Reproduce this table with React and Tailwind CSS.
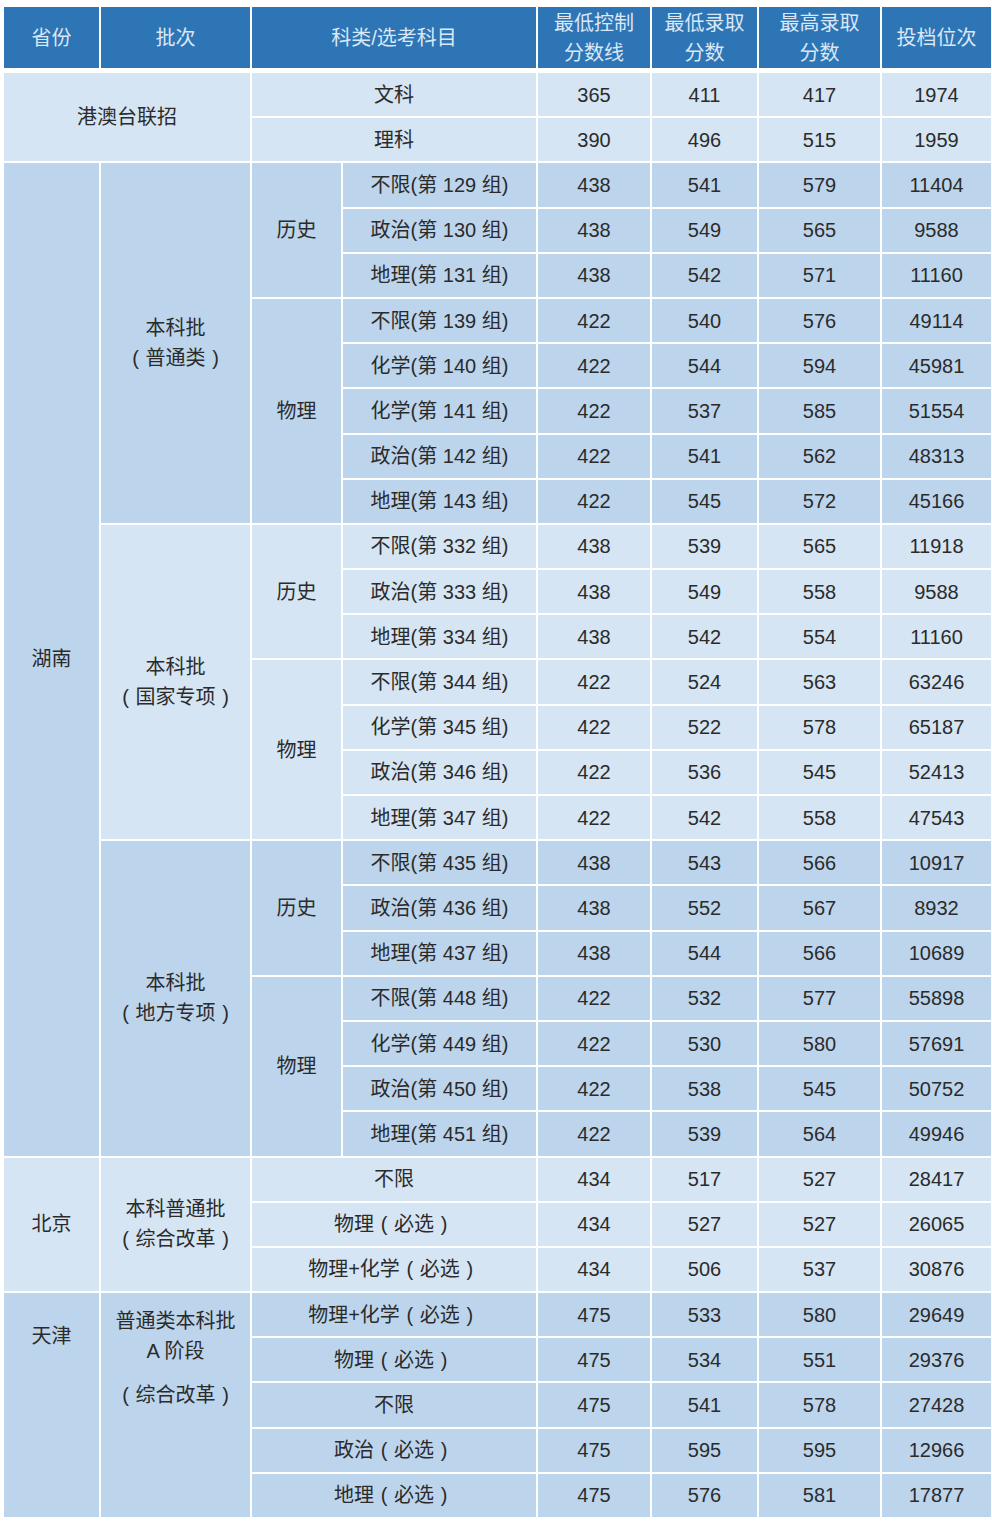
import React from "react";

const DARK = "bg-[#bdd5ec]";
const LIGHT = "bg-[#d6e5f3]";
const COLS = "grid grid-cols-[95px_149px_89px_193px_112px_105px_121px_109px] gap-[2px]";
const COLSTART = ["col-start-1", "col-start-2", "col-start-3", "col-start-4", "col-start-5", "col-start-6", "col-start-7", "col-start-8"];

function T({ s }) {
  if (typeof s !== "string") return s;
  const parts = s.split(/([（）])/);
  return parts.map((p, i) =>
    p === "（" ? (
      <span key={i} className="inline-block w-[1em] text-center">(</span>
    ) : p === "）" ? (
      <span key={i} className="inline-block w-[1em] text-center">)</span>
    ) : (
      <React.Fragment key={i}>{p}</React.Fragment>
    )
  );
}

function Cell({ col, span = "", bg, className = "", children }) {
  return (
    <div className={`${COLSTART[col - 1]} ${span} ${bg} flex flex-col items-center justify-center text-center text-[20px] leading-[30px] text-[#2b2b2b] ${className}`}>
      {children}
    </div>
  );
}

function Nums({ vals, bg }) {
  return vals.map((v, i) => (
    <Cell key={i} col={5 + i} bg={bg}>
      {v}
    </Cell>
  ));
}

const hunan = [
  {
    label: ["本科批", "（普通类）"],
    bg: DARK,
    groups: [
      {
        name: "历史",
        rows: [
          ["不限(第 129 组)", 438, 541, 579, 11404],
          ["政治(第 130 组)", 438, 549, 565, 9588],
          ["地理(第 131 组)", 438, 542, 571, 11160],
        ],
      },
      {
        name: "物理",
        rows: [
          ["不限(第 139 组)", 422, 540, 576, 49114],
          ["化学(第 140 组)", 422, 544, 594, 45981],
          ["化学(第 141 组)", 422, 537, 585, 51554],
          ["政治(第 142 组)", 422, 541, 562, 48313],
          ["地理(第 143 组)", 422, 545, 572, 45166],
        ],
      },
    ],
  },
  {
    label: ["本科批", "（国家专项）"],
    bg: LIGHT,
    groups: [
      {
        name: "历史",
        rows: [
          ["不限(第 332 组)", 438, 539, 565, 11918],
          ["政治(第 333 组)", 438, 549, 558, 9588],
          ["地理(第 334 组)", 438, 542, 554, 11160],
        ],
      },
      {
        name: "物理",
        rows: [
          ["不限(第 344 组)", 422, 524, 563, 63246],
          ["化学(第 345 组)", 422, 522, 578, 65187],
          ["政治(第 346 组)", 422, 536, 545, 52413],
          ["地理(第 347 组)", 422, 542, 558, 47543],
        ],
      },
    ],
  },
  {
    label: ["本科批", "（地方专项）"],
    bg: DARK,
    groups: [
      {
        name: "历史",
        rows: [
          ["不限(第 435 组)", 438, 543, 566, 10917],
          ["政治(第 436 组)", 438, 552, 567, 8932],
          ["地理(第 437 组)", 438, 544, 566, 10689],
        ],
      },
      {
        name: "物理",
        rows: [
          ["不限(第 448 组)", 422, 532, 577, 55898],
          ["化学(第 449 组)", 422, 530, 580, 57691],
          ["政治(第 450 组)", 422, 538, 545, 50752],
          ["地理(第 451 组)", 422, 539, 564, 49946],
        ],
      },
    ],
  },
];

const SPAN = { 3: "row-span-3", 4: "row-span-4", 5: "row-span-5", 7: "row-span-7", 8: "row-span-8" };

export default function App() {
  const cells = [];
  let k = 0;
  // HK
  cells.push(
    <Cell key={k++} col={1} span="col-span-2 row-span-2" bg={LIGHT}>港澳台联招</Cell>,
    <Cell key={k++} col={3} span="col-span-2" bg={LIGHT}>文科</Cell>,
    ...Nums({ vals: [365, 411, 417, 1974], bg: LIGHT }).map((c) => React.cloneElement(c, { key: k++ })),
    <Cell key={k++} col={3} span="col-span-2" bg={LIGHT}>理科</Cell>,
    ...Nums({ vals: [390, 496, 515, 1959], bg: LIGHT }).map((c) => React.cloneElement(c, { key: k++ }))
  );
  // Hunan
  cells.push(
    <Cell key={k++} col={1} span="row-span-22" bg={DARK}>湖南</Cell>
  );
  hunan.forEach((b) => {
    const total = b.groups.reduce((s, g) => s + g.rows.length, 0);
    b.groups.forEach((g, gi) => {
      g.rows.forEach((r, ri) => {
        if (gi === 0 && ri === 0) {
          cells.push(
            <Cell key={k++} col={2} span={SPAN[total]} bg={b.bg}>
              <span>{b.label[0]}</span>
              <span><T s={b.label[1]} /></span>
            </Cell>
          );
        }
        if (ri === 0) {
          cells.push(
            <Cell key={k++} col={3} span={SPAN[g.rows.length]} bg={b.bg}>{g.name}</Cell>
          );
        }
        cells.push(<Cell key={k++} col={4} bg={b.bg}>{r[0]}</Cell>);
        Nums({ vals: r.slice(1), bg: b.bg }).forEach((c) => cells.push(React.cloneElement(c, { key: k++ })));
      });
    });
  });
  // Beijing
  const bj = [
    ["不限", 434, 517, 527, 28417],
    ["物理（必选）", 434, 527, 527, 26065],
    ["物理+化学（必选）", 434, 506, 537, 30876],
  ];
  bj.forEach((r, i) => {
    if (i === 0) {
      cells.push(
        <Cell key={k++} col={1} span="row-span-3" bg={LIGHT}>北京</Cell>,
        <Cell key={k++} col={2} span="row-span-3" bg={LIGHT}>
          <span>本科普通批</span>
          <span><T s="（综合改革）" /></span>
        </Cell>
      );
    }
    cells.push(<Cell key={k++} col={3} span="col-span-2" bg={LIGHT}><span><T s={r[0]} /></span></Cell>);
    Nums({ vals: r.slice(1), bg: LIGHT }).forEach((c) => cells.push(React.cloneElement(c, { key: k++ })));
  });
  // Tianjin
  const tj = [
    ["物理+化学（必选）", 475, 533, 580, 29649],
    ["物理（必选）", 475, 534, 551, 29376],
    ["不限", 475, 541, 578, 27428],
    ["政治（必选）", 475, 595, 595, 12966],
    ["地理（必选）", 475, 576, 581, 17877],
  ];
  tj.forEach((r, i) => {
    if (i === 0) {
      cells.push(
        <Cell key={k++} col={1} span="row-span-5" bg={DARK} className="!justify-start pt-[28px]">天津</Cell>,
        <Cell key={k++} col={2} span="row-span-5" bg={DARK} className="!justify-start pt-[13px]">
          <span>普通类本科批</span>
          <span>A 阶段</span>
          <span className="mt-[14px]"><T s="（综合改革）" /></span>
        </Cell>
      );
    }
    cells.push(<Cell key={k++} col={3} span="col-span-2" bg={DARK}><span><T s={r[0]} /></span></Cell>);
    Nums({ vals: r.slice(1), bg: DARK }).forEach((c) => cells.push(React.cloneElement(c, { key: k++ })));
  });

  const head = "bg-[#2e75b6] text-[#dae7f5] text-[20px] leading-[30px] flex flex-col items-center justify-center text-center";

  return (
    <div
      className="w-[992px] min-h-[1521px] bg-white pt-[7px] pl-[4px]"
      style={{ fontFamily: '"Liberation Sans", "Noto Sans CJK SC", sans-serif' }}
    >
      <div className={`${COLS} h-[61px]`}>
        <div className={head}>省份</div>
        <div className={head}>批次</div>
        <div className={`${head} col-span-2`}>科类/选考科目</div>
        <div className={head}>
          <span>最低控制</span>
          <span>分数线</span>
        </div>
        <div className={head}>
          <span>最低录取</span>
          <span>分数</span>
        </div>
        <div className={head}>
          <span>最高录取</span>
          <span>分数</span>
        </div>
        <div className={head}>投档位次</div>
      </div>
      <div className={`${COLS} grid-rows-[repeat(32,43.2px)] mt-[5px]`}>{cells}</div>
    </div>
  );
}
